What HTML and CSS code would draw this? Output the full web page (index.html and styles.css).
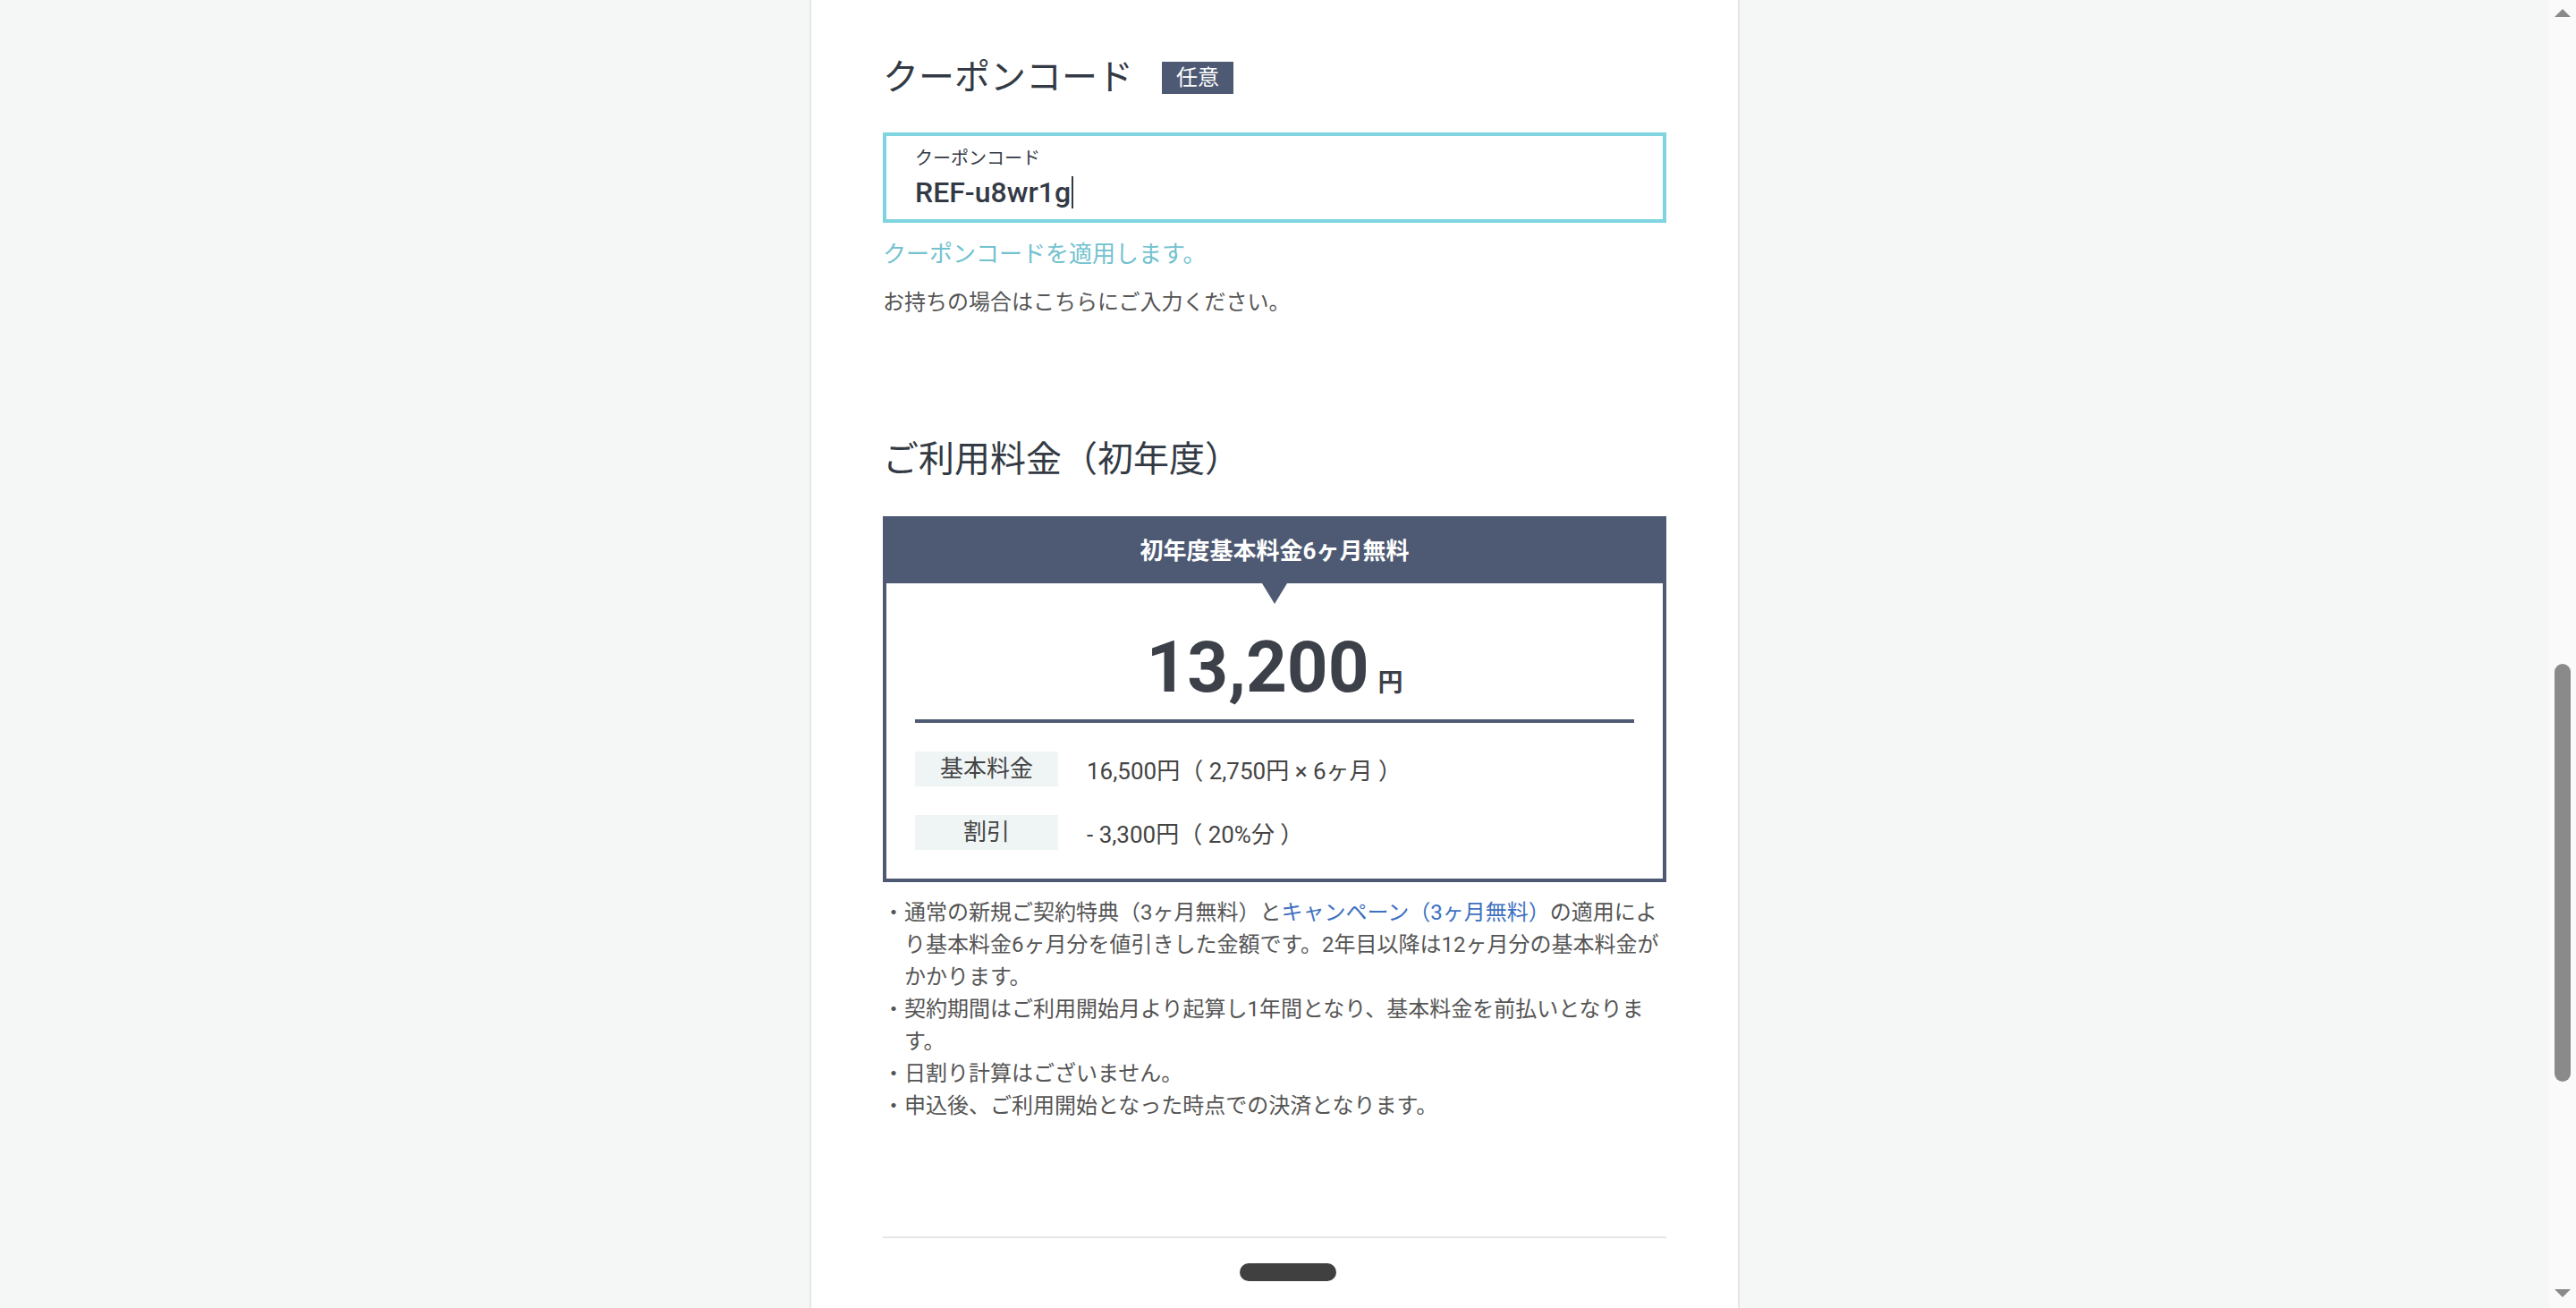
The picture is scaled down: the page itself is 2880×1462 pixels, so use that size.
FILE: index.html
```html
<!DOCTYPE html>
<html lang="ja">
<head>
    <meta charset="UTF-8">
    <meta name="viewport" content="width=device-width, initial-scale=1.0">
    <title>お申込み</title>
    <link rel="stylesheet" href="styles.css">
</head>
<body>
    <div class="page">
        <main class="column">
            <section class="coupon">
                <div class="section-head">
                    <h2>クーポンコード</h2>
                    <span class="badge">任意</span>
                </div>
                <div class="field">
                    <span class="field-label">クーポンコード</span>
                    <div class="field-value">REF-u8wr1g<span class="caret"></span></div>
                </div>
                <p class="apply">クーポンコードを適用します。</p>
                <p class="hint">お持ちの場合はこちらにご入力ください。</p>
            </section>

            <section class="fee">
                <h2>ご利用料金（初年度）</h2>
                <div class="price-box">
                    <div class="price-head">初年度基本料金6ヶ月無料</div>
                    <div class="price-body">
                        <div class="price-total"><span class="price-num">13,200</span><span class="price-yen">円</span></div>
                        <div class="price-rows">
                            <div class="price-row">
                                <span class="price-label">基本料金</span>
                                <span class="price-value">16,500円（ 2,750円 × 6ヶ月 ）</span>
                            </div>
                            <div class="price-row">
                                <span class="price-label">割引</span>
                                <span class="price-value">- 3,300円（ 20%分 ）</span>
                            </div>
                        </div>
                    </div>
                </div>
                <ul class="notes">
                    <li>通常の新規ご契約特典（3ヶ月無料）と<a href="#">キャンペーン（3ヶ月無料）</a>の適用により基本料金6ヶ月分を値引きした金額です。2年目以降は12ヶ月分の基本料金がかかります。</li>
                    <li>契約期間はご利用開始月より起算し1年間となり、基本料金を前払いとなります。</li>
                    <li>日割り計算はございません。</li>
                    <li>申込後、ご利用開始となった時点での決済となります。</li>
                </ul>
            </section>

            <hr class="divider">
        </main>
    </div>

    <div class="rail">
        <span class="rail-up"></span>
        <span class="rail-thumb"></span>
        <span class="rail-down"></span>
    </div>

    <div class="pill"></div>
</body>
</html>
```

FILE: styles.css
```css
html, body {
    margin: 0;
    padding: 0;
    height: 100%;
    overflow: hidden;
}
body {
    display: flex;
    font-family: Roboto, "Noto Sans CJK JP", sans-serif;
    color: #333a44;
    background-color: #f5f7f7;
}
.page {
    flex: 1;
    height: 100%;
    overflow: hidden;
}
.column {
    box-sizing: border-box;
    width: 1040px;
    min-height: 100%;
    margin: 0 auto;
    padding: 57px 80px 0;
    background-color: #fff;
    border-left: 2px solid #e6e6e6;
    border-right: 2px solid #e6e6e6;
}
h2 {
    margin: 0;
    font-size: 40px;
    font-weight: 400;
    line-height: 60px;
    color: #333a44;
}
p {
    margin: 0;
}

/* coupon */
.section-head {
    display: flex;
    align-items: center;
    gap: 32px;
}
.badge {
    padding: 0 16px;
    font-size: 24px;
    line-height: 36px;
    color: #fff;
    background-color: #4e5a73;
}
.field {
    box-sizing: border-box;
    height: 101px;
    margin-top: 31px;
    padding: 10px 32px 0;
    border: 4px solid #7fd4e0;
}
.field-label {
    display: block;
    font-size: 20px;
    line-height: 30px;
    color: #333a44;
}
.field-value {
    margin-top: 3px;
    font-size: 32px;
    font-weight: 500;
    line-height: 40px;
    color: #343a45;
}
.caret {
    display: inline-block;
    width: 2px;
    height: 36px;
    margin-left: 1px;
    vertical-align: -7px;
    background-color: #333a44;
}
.apply {
    margin-top: 16px;
    font-size: 26px;
    line-height: 39px;
    color: #72c2cf;
}
.hint {
    margin-top: 16px;
    font-size: 24px;
    line-height: 36px;
    color: #555;
}

/* fee */
.fee {
    margin-top: 128px;
}
.price-box {
    margin-top: 33px;
    border: 4px solid #4e5a73;
}
.price-head {
    position: relative;
    height: 71px;
    font-size: 26px;
    font-weight: 700;
    line-height: 71px;
    text-align: center;
    color: #fff;
    background-color: #4e5a73;
}
.price-head::after {
    content: "";
    position: absolute;
    left: 50%;
    top: 100%;
    margin-left: -14px;
    border-top: 23px solid #4e5a73;
    border-left: 14px solid transparent;
    border-right: 14px solid transparent;
}
.price-body {
    padding: 0 32px 32px;
}
.price-total {
    padding: 54px 0 18px;
    font-size: 80px;
    font-weight: 700;
    line-height: 80px;
    text-align: center;
    color: #3c4049;
    border-bottom: 4px solid #4e5a73;
}
.price-yen {
    margin-left: 10px;
    font-size: 28px;
    line-height: 1;
}
.price-rows {
    display: flex;
    flex-direction: column;
    gap: 32px;
    margin-top: 32px;
}
.price-row {
    display: flex;
    align-items: center;
    gap: 32px;
    font-size: 26px;
    color: #444;
}
.price-label {
    width: 160px;
    line-height: 39px;
    text-align: center;
    background-color: #eff5f5;
}
.notes {
    margin: 16px 0 0;
    padding: 0 0 0 24px;
    list-style: none;
    font-size: 24px;
    line-height: 36px;
    color: #555;
}
.notes li::before {
    content: "・";
    display: inline-block;
    width: 24px;
    margin-left: -24px;
}
.notes a {
    color: #3e70c0;
    text-decoration: none;
}
.divider {
    height: 2px;
    margin: 128px 0 0;
    border: 0;
    background-color: #e6e6e6;
}

/* scroll rail */
.rail {
    display: flex;
    flex-direction: column;
    align-items: center;
    width: 30px;
    height: 100%;
    background-color: #fafafa;
}
.rail-up {
    margin-top: 10px;
    border-left: 9px solid transparent;
    border-right: 9px solid transparent;
    border-bottom: 9px solid #8a8a8a;
}
.rail-thumb {
    width: 18px;
    height: 467px;
    margin-top: 723px;
    border-radius: 9px;
    background-color: #8a8a8a;
}
.rail-down {
    margin-top: auto;
    margin-bottom: 12px;
    border-left: 9px solid transparent;
    border-right: 9px solid transparent;
    border-top: 9px solid #8a8a8a;
}

.pill {
    position: absolute;
    left: 50%;
    top: 1412px;
    width: 108px;
    height: 20px;
    margin-left: -54px;
    border-radius: 10px;
    background-color: #404040;
}
```
